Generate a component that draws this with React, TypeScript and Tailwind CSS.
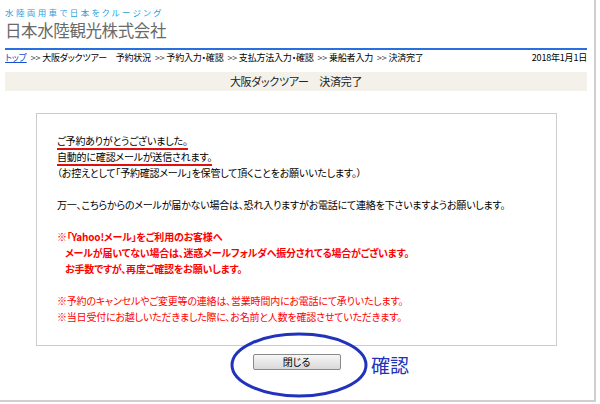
export default function App() {
  const crumbs = ["大阪ダックツアー\u3000予約状況", "予約入力・確認", "支払方法入力・確認", "乗船者入力", "決済完了"];

  return (
    <div className="w-[600px] h-[404px] bg-white overflow-hidden [font-family:'Noto_Sans_CJK_JP','Noto_Sans',sans-serif] [font-feature-settings:'palt'] text-black">
      <div className="relative w-[596px] h-[402px] border-r-2 border-b-2 border-[#cfcfcf]">
        {/* Header */}
        <div className="px-[5px] pt-[6px]">
          <p className="text-[8.5px] leading-[12px] tracking-[2.4px] text-[#2a9fdc]">水陸両用車で日本をクルージング</p>
          <h1 className="mt-[1px] text-[16.5px] leading-[22px] tracking-[-0.4px] text-[#6a6a6a]">日本水陸観光株式会社</h1>
          <div className="mt-[7px] h-[2px] w-[582px] bg-[#2a6fe0]" />

          {/* Breadcrumb */}
          <div className="flex w-[582px] items-center justify-between h-[16px] text-[9px] leading-[16px] tracking-[-0.2px]">
            <div className="flex items-center">
              <span className="text-[#1a4fd0] underline">トップ</span>
              {crumbs.map((c) => (
                <span key={c} className="ml-[4px]">
                  <span className="text-[#444]">&gt;&gt;</span> {c}
                </span>
              ))}
            </div>
            <span>2018年1月1日</span>
          </div>

          {/* Title bar */}
          <div className="mt-[6px] flex h-[19px] w-[582px] items-center justify-center bg-[#f3f1ea] text-[11px] tracking-[-0.3px] text-[#222]">
            大阪ダックツアー&#12288;決済完了
          </div>
        </div>

        {/* Message box */}
        <div className="ml-[36px] mt-[22px] w-[521px] border border-[#cccccc] px-[20px] pt-[19px] pb-[20px] text-[10px] leading-[16px] tracking-[-0.2px]">
          <p className="relative w-fit">
            ご予約ありがとうございました。
            <span className="absolute left-0 right-0 bottom-[-1px] h-[2px] bg-[#e01010]" />
          </p>
          <p className="relative w-fit">
            自動的に確認メールが送信されます。
            <span className="absolute left-0 right-0 bottom-[-1px] h-[2px] bg-[#e01010]" />
          </p>
          <p>（お控えとして「予約確認メール」を保管して頂くことをお願いいたします。）</p>
          <p className="h-[16px]" />
          <p>万一、こちらからのメールが届かない場合は、恐れ入りますがお電話にて連絡を下さいますようお願いします。</p>
          <p className="h-[16px]" />
          <div className="font-bold text-[#ff0000]">
            <p>※「Yahoo!メール」をご利用のお客様へ</p>
            <p className="pl-[8px]">メールが届いてない場合は、迷惑メールフォルダへ振分されてる場合がございます。</p>
            <p className="pl-[8px]">お手数ですが、再度ご確認をお願いします。</p>
          </div>
          <p className="h-[16px]" />
          <div className="text-[#ff0000]">
            <p>※予約のキャンセルやご変更等の連絡は、営業時間内にお電話にて承りいたします。</p>
            <p>※当日受付にお越しいただきました際に、お名前と人数を確認させていただきます。</p>
          </div>
        </div>

        {/* Close button */}
        <div className="ml-[36px] mt-[8px] flex w-[521px] justify-center">
          <button className="h-[16px] w-[88px] rounded-[2px] border border-[#8a8a8a] bg-gradient-to-b from-[#f6f6f6] to-[#d9d9d9] text-[10px] leading-[14px] text-black">
            閉じる
          </button>
        </div>

        {/* Annotation */}
        <svg className="absolute left-[229px] top-[331px]" width="140" height="68" viewBox="0 0 140 68">
          <ellipse cx="70" cy="34" rx="67" ry="31" fill="none" stroke="#2233bb" strokeWidth="3" />
        </svg>
        <span className="absolute left-[371px] top-[352px] text-[19px] leading-[26px] text-[#2233bb]">確認</span>
      </div>
    </div>
  );
}
